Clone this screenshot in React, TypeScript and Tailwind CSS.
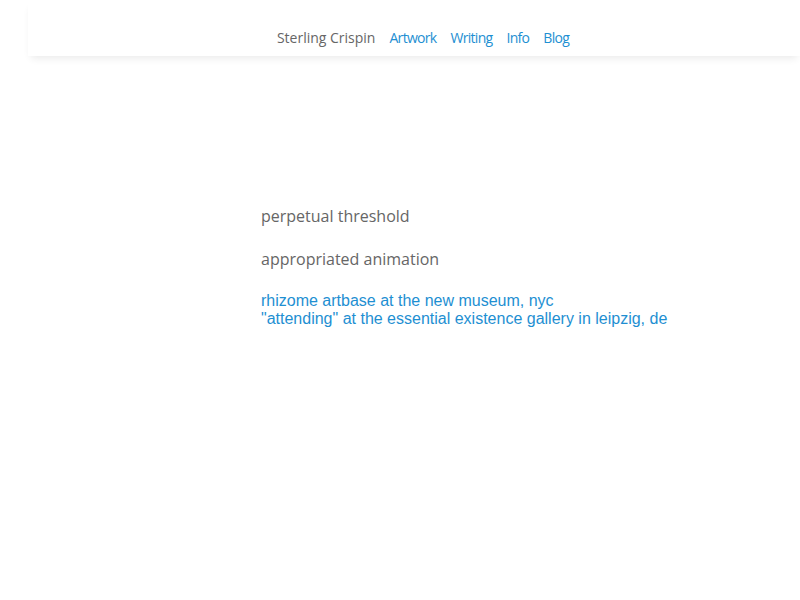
import React from 'react';

const links = ['Artwork', 'Writing', 'Info', 'Blog'];

const App: React.FC = () => {
  return (
    <div className="min-h-[600px] bg-white">
      {/* Header */}
      <div className="pl-[28px]">
        <header className="h-[56px] bg-white shadow-[0_5px_8px_-3px_rgba(0,0,0,0.09)] flex items-end justify-center pb-[8px] pl-[18px] font-['Open_Sans',sans-serif] text-[14px]">
          <span className="text-[#666666]">Sterling Crispin</span>
          {links.map((l) => (
            <a key={l} href="#" className="ml-[14px] text-[#1e8fd2] tracking-[-0.7px]">
              {l}
            </a>
          ))}
        </header>
      </div>

      {/* Content */}
      <main className="pl-[261px] pt-[148px]">
        <p className="font-['Open_Sans',sans-serif] text-[16px] leading-[24px] text-[#666666]">perpetual threshold</p>
        <p className="mt-[19px] font-['Open_Sans',sans-serif] text-[16px] leading-[24px] text-[#666666]">appropriated animation</p>
        <div className="mt-[21px] font-['Liberation_Sans',Arial,sans-serif] text-[16px] leading-[18px] text-[#1e8fd2]">
          <a href="#" className="block">rhizome artbase at the new museum, nyc</a>
          <a href="#" className="block">"attending" at the essential existence gallery in leipzig, de</a>
        </div>
      </main>
    </div>
  );
};

export default App;
